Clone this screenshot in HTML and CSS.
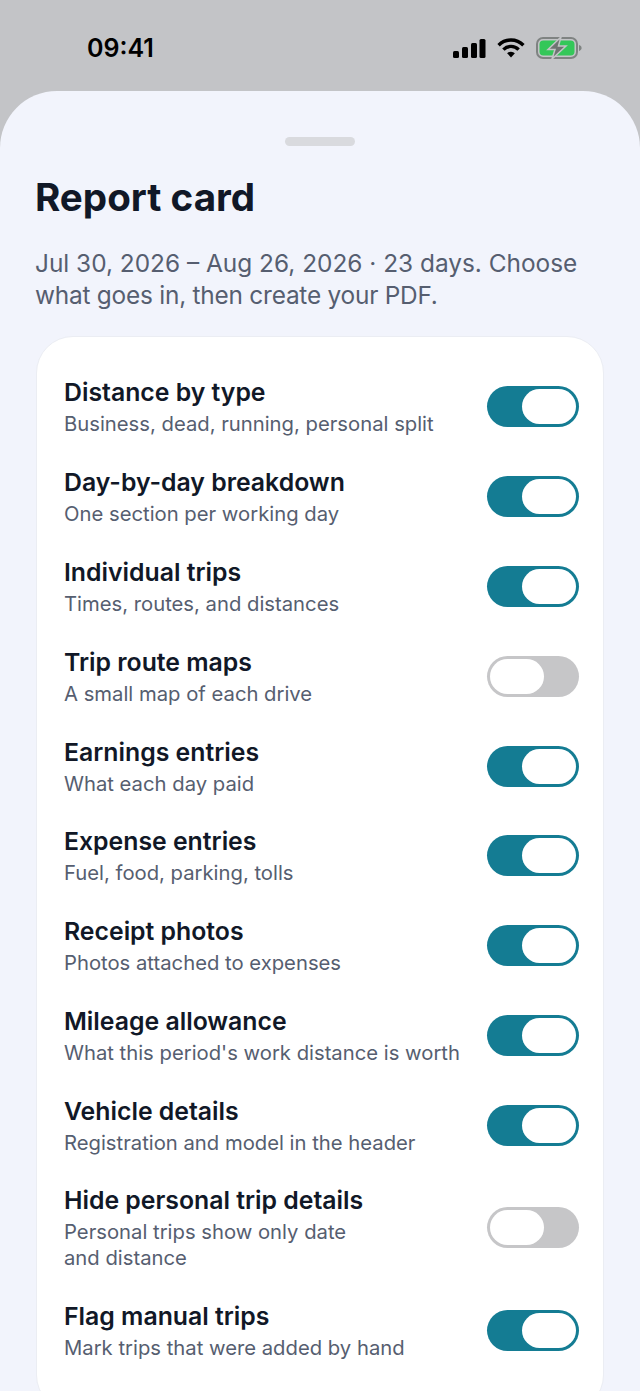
FILE: index.html
```html
<!DOCTYPE html>
<html lang="en">

<head>
    <meta charset="UTF-8">
    <meta name="viewport" content="width=device-width, initial-scale=1.0">
    <title>Report card</title>
    <link rel="stylesheet" href="styles.css">
</head>

<body>
    <div class="status-bar">
        <span class="time">09:41</span>
        <div class="status-icons">
            <svg width="34" height="20" viewBox="0 0 34 20">
                <rect x="1" y="13" width="6" height="7" rx="1.5" fill="#000" />
                <rect x="10" y="9" width="6" height="11" rx="1.5" fill="#000" />
                <rect x="19" y="5" width="6" height="15" rx="1.5" fill="#000" />
                <rect x="27.5" y="1" width="6" height="19" rx="1.5" fill="#000" />
            </svg>
            <svg width="28" height="20" viewBox="0 0 28 20" fill="none" stroke="#000" stroke-width="3.4">
                <path d="M1.6 7.2a17.4 17.4 0 0 1 24.8 0" />
                <path d="M6.4 11.6a10.6 10.6 0 0 1 15.2 0" />
                <path d="M14 19.4l-3.9-4.1a5.4 5.4 0 0 1 7.8 0z" fill="#000" stroke="none" />
            </svg>
            <svg width="46" height="22" viewBox="0 0 46 22">
                <rect x="1" y="1" width="40" height="20" rx="6" fill="none" stroke="#7f8382" stroke-width="2" />
                <rect x="3.5" y="3.5" width="35" height="15" rx="4" fill="#34c759" />
                <path d="M43 8v6c1.6-.4 2.6-1.6 2.600-3S44.600 8.400 43 8z" fill="#7f8382" />
                <path d="M25 0 12 12.500h7L16 22 30 9h-7.500z" fill="#6f7472" stroke="#c3c4c7" stroke-width="1.500" />
            </svg>
        </div>
    </div>

    <main class="sheet">
        <div class="handle"></div>
        <h1>Report card</h1>
        <p class="intro">Jul 30, 2026 – Aug 26, 2026 · 23 days. Choose <span class="intro-end">what goes in, then create your PDF.</span></p>

        <section class="card">
            <div class="row">
                <div class="row-text">
                    <div class="row-title">Distance by type</div>
                    <div class="row-sub">Business, dead, running, personal split</div>
                </div>
                <span class="toggle on"><span class="knob"></span></span>
            </div>
            <div class="row">
                <div class="row-text">
                    <div class="row-title">Day-by-day breakdown</div>
                    <div class="row-sub">One section per working day</div>
                </div>
                <span class="toggle on"><span class="knob"></span></span>
            </div>
            <div class="row">
                <div class="row-text">
                    <div class="row-title">Individual trips</div>
                    <div class="row-sub">Times, routes, and distances</div>
                </div>
                <span class="toggle on"><span class="knob"></span></span>
            </div>
            <div class="row">
                <div class="row-text">
                    <div class="row-title">Trip route maps</div>
                    <div class="row-sub">A small map of each drive</div>
                </div>
                <span class="toggle"><span class="knob"></span></span>
            </div>
            <div class="row">
                <div class="row-text">
                    <div class="row-title">Earnings entries</div>
                    <div class="row-sub">What each day paid</div>
                </div>
                <span class="toggle on"><span class="knob"></span></span>
            </div>
            <div class="row">
                <div class="row-text">
                    <div class="row-title">Expense entries</div>
                    <div class="row-sub">Fuel, food, parking, tolls</div>
                </div>
                <span class="toggle on"><span class="knob"></span></span>
            </div>
            <div class="row">
                <div class="row-text">
                    <div class="row-title">Receipt photos</div>
                    <div class="row-sub">Photos attached to expenses</div>
                </div>
                <span class="toggle on"><span class="knob"></span></span>
            </div>
            <div class="row">
                <div class="row-text">
                    <div class="row-title">Mileage allowance</div>
                    <div class="row-sub">What this period's work distance is worth</div>
                </div>
                <span class="toggle on"><span class="knob"></span></span>
            </div>
            <div class="row">
                <div class="row-text">
                    <div class="row-title">Vehicle details</div>
                    <div class="row-sub">Registration and model in the header</div>
                </div>
                <span class="toggle on"><span class="knob"></span></span>
            </div>
            <div class="row">
                <div class="row-text">
                    <div class="row-title">Hide personal trip details</div>
                    <div class="row-sub">Personal trips show only date<br>and distance</div>
                </div>
                <span class="toggle"><span class="knob"></span></span>
            </div>
            <div class="row">
                <div class="row-text">
                    <div class="row-title">Flag manual trips</div>
                    <div class="row-sub">Mark trips that were added by hand</div>
                </div>
                <span class="toggle on"><span class="knob"></span></span>
            </div>
        </section>
    </main>
</body>

</html>
```

FILE: styles.css
```css
html,
body {
    height: 100%;
}

body {
    margin: 0;
    overflow: hidden;
    background-color: #c3c4c7;
    font-family: Inter, "Liberation Sans", sans-serif;
}

.status-bar {
    display: flex;
    justify-content: space-between;
    align-items: center;
    height: 91px;
    box-sizing: border-box;
    padding: 4px 58px 0 87px;
}

.time {
    font-size: 25px;
    font-weight: 600;
    color: #000;
}

.status-icons {
    display: flex;
    align-items: center;
    gap: 11px;
}

.sheet {
    height: 1300px;
    box-sizing: border-box;
    padding: 46px 36px 0 35px;
    overflow: hidden;
    border-radius: 57px 57px 0 0;
    background-color: #f2f4fc;
}

.handle {
    width: 70px;
    height: 9px;
    margin: 0 auto;
    border-radius: 5px;
    background-color: #d9dade;
}

h1 {
    margin: 28px 0 0;
    font-size: 38.6px;
    line-height: 46px;
    font-weight: 700;
    color: #111827;
}

.intro {
    margin: 27px 0 0;
    font-size: 24.4px;
    line-height: 32px;
    color: #565e70;
}

.intro-end {
    letter-spacing: -0.22px;
}

.card {
    margin: 25px 0 0 1px;
    padding: 25px 24px 35px 27px;
    border: 1px solid #ebedf3;
    border-radius: 37px;
    background-color: #fff;
}

.row {
    display: flex;
    justify-content: space-between;
    align-items: center;
    padding: 14.4px 0;
}

.row-title {
    font-size: 24.8px;
    line-height: 32px;
    font-weight: 600;
    color: #111827;
}

.row-sub {
    margin-top: 3px;
    font-size: 20.25px;
    line-height: 26px;
    color: #565e70;
}

.toggle {
    display: flex;
    flex-shrink: 0;
    justify-content: flex-start;
    width: 92px;
    height: 41px;
    box-sizing: border-box;
    padding: 3px;
    border-radius: 21px;
    background-color: #c6c6c8;
}

.toggle.on {
    justify-content: flex-end;
    background-color: #147c93;
}

.knob {
    width: 54px;
    height: 35px;
    border-radius: 18px;
    background-color: #fff;
}
```
